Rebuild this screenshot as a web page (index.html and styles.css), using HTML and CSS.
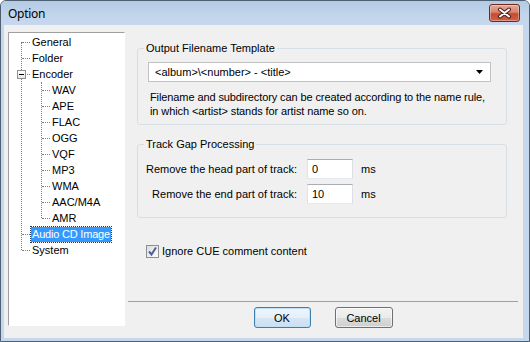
FILE: index.html
```html
<!DOCTYPE html>
<html lang="en">

<head>
    <meta charset="UTF-8">
    <title>Option</title>
    <link rel="stylesheet" href="styles.css">
</head>

<body>
    <div class="window">
        <!-- Title bar -->
        <div class="titlebar">
            <span class="title">Option</span>
            <button class="close-btn">
                <svg width="29" height="16" viewBox="0 0 29 16">
                    <path d="M10 4.5 L19 11.5 M19 4.5 L10 11.5" stroke="#4a1d15" stroke-width="4" stroke-linecap="round" fill="none"/>
                    <path d="M10 4.5 L19 11.5 M19 4.5 L10 11.5" stroke="#fff" stroke-width="2" stroke-linecap="round" fill="none"/>
                </svg>
            </button>
        </div>

        <div class="client">
            <!-- Category tree -->
            <div class="tree">
                <ul class="tree-root">
                    <li><span class="node">General</span></li>
                    <li><span class="node">Folder</span></li>
                    <li>
                        <span class="node"><i class="toggle"></i>Encoder</span>
                        <ul class="tree-sub">
                            <li><span class="node">WAV</span></li>
                            <li><span class="node">APE</span></li>
                            <li><span class="node">FLAC</span></li>
                            <li><span class="node">OGG</span></li>
                            <li><span class="node">VQF</span></li>
                            <li><span class="node">MP3</span></li>
                            <li><span class="node">WMA</span></li>
                            <li><span class="node">AAC/M4A</span></li>
                            <li><span class="node">AMR</span></li>
                        </ul>
                    </li>
                    <li><span class="node"><span class="selected">Audio CD Image</span></span></li>
                    <li><span class="node">System</span></li>
                </ul>
            </div>

            <!-- Settings page -->
            <div class="main">
                <div class="content">
                    <fieldset class="group group-template">
                        <legend>Output Filename Template</legend>
                        <div class="combo">
                            <span>&lt;album&gt;\&lt;number&gt; - &lt;title&gt;</span>
                            <svg width="7" height="4" viewBox="0 0 7 4"><path d="M0 0 H7 L3.5 4 Z" fill="#000"/></svg>
                        </div>
                        <p class="hint">Filename and subdirectory can be created according to the name rule,<br>in which &lt;artist&gt; stands for artist name so on.</p>
                    </fieldset>

                    <fieldset class="group group-gap">
                        <legend>Track Gap Processing</legend>
                        <div class="gap-grid">
                            <label>Remove the head part of track:</label>
                            <input type="text" value="0">
                            <span class="unit">ms</span>
                            <label>Remove the end part of track:</label>
                            <input type="text" value="10">
                            <span class="unit">ms</span>
                        </div>
                    </fieldset>

                    <label class="check-row">
                        <span class="checkbox">
                            <svg width="11" height="11" viewBox="0 0 11 11"><path d="M2 5.5 L4.5 8.5 L9 1.5" stroke="#4a5f9c" stroke-width="2" fill="none"/></svg>
                        </span>
                        Ignore CUE comment content
                    </label>
                </div>

                <div class="footer">
                    <button class="btn btn-default">OK</button>
                    <button class="btn">Cancel</button>
                </div>
            </div>
        </div>
    </div>
</body>

</html>
```

FILE: styles.css
```css
* {
    box-sizing: border-box;
    margin: 0;
    padding: 0;
}

body {
    width: 530px;
    height: 342px;
    overflow: hidden;
    font-family: "Liberation Sans", Arial, sans-serif;
    font-size: 11px;
    color: #000;
    background: #fff;
}

.window {
    width: 530px;
    height: 342px;
    display: flex;
    flex-direction: column;
    border: 1px solid #4e5f73;
    border-radius: 6px 6px 0 0;
    background: #c4d7ec;
    overflow: hidden;
}

.titlebar {
    height: 24px;
    display: flex;
    align-items: center;
    justify-content: space-between;
    padding: 0 9px 0 7px;
    background: linear-gradient(#b4cbe5, #c2d5eb 60%, #c6d8ed);
}

.title {
    font-family: "Noto Sans", sans-serif;
    font-size: 12px;
    letter-spacing: -0.3px;
    color: #000;
}

.close-btn {
    width: 31px;
    height: 18px;
    border: 1px solid #6e2a20;
    border-radius: 3px;
    background: linear-gradient(#e6a897 0%, #d8836e 45%, #c44b30 55%, #cd6247 100%);
    box-shadow: inset 0 0 0 1px rgba(255, 255, 255, 0.35);
    display: flex;
    align-items: center;
    justify-content: center;
}

.client {
    flex: 1;
    display: flex;
    margin: 0 6px 3px 3px;
    background: #f0f0f0;
}

/* Tree */
.tree {
    width: 117px;
    margin: 7px 0 12px 4px;
    padding-top: 1px;
    background: #fff;
    border: 1px solid;
    border-color: #a0a0a0 #fff #fff #a0a0a0;
}

.tree ul {
    list-style: none;
    position: relative;
}

.tree-root::before,
.tree-sub::before {
    content: "";
    position: absolute;
    top: 8px;
    bottom: 8px;
    left: 12px;
    border-left: 1px dotted #808080;
}

.tree-sub {
    padding-left: 20px;
}

.tree-sub::before {
    top: 0;
    left: 32px;
}

.node {
    position: relative;
    height: 16px;
    display: flex;
    align-items: center;
    padding-left: 23px;
    white-space: nowrap;
}

.node::before {
    content: "";
    position: absolute;
    top: 8px;
    left: 13px;
    width: 8px;
    border-top: 1px dotted #808080;
}

.toggle {
    position: absolute;
    top: 4px;
    left: 8px;
    width: 9px;
    height: 9px;
    border: 1px solid #919191;
    background: linear-gradient(#fff, #e6e6e6);
    z-index: 1;
}

.toggle::after {
    content: "";
    position: absolute;
    top: 3px;
    left: 1px;
    width: 5px;
    height: 1px;
    background: #000;
}

.selected {
    margin-left: -1px;
    padding: 1px 1px;
    line-height: 13px;
    letter-spacing: -0.2px;
    background: #3399ff;
    color: #fff;
    outline: 1px dotted #1a3c66;
}

/* Right page */
.main {
    flex: 1;
    display: flex;
    flex-direction: column;
}

.content {
    flex: 1;
    padding: 16px 16px 0 12px;
}

.group {
    border: 1px solid #d5dfe5;
    border-radius: 3px;
    padding: 7px 15px 6px 10px;
    min-width: 0;
}

.group legend {
    padding: 0 2px;
    margin-left: -4px;
    line-height: 14px;
}

.combo {
    height: 20px;
    display: flex;
    align-items: center;
    justify-content: space-between;
    padding: 0 7px 0 6px;
    background: #fff;
    border: 1px solid #c2c2c2;
}

.hint {
    margin: 8px 0 0 2px;
    line-height: 14px;
    white-space: nowrap;
    letter-spacing: -0.1px;
}

.group-gap {
    margin-top: 12px;
    padding: 8px 0 13px 10px;
}

.gap-grid {
    margin-left: -10px;
    display: grid;
    grid-template-columns: 159px 46px auto;
    grid-auto-rows: 20px;
    column-gap: 10px;
    row-gap: 5px;
    align-items: center;
}

.gap-grid label {
    text-align: right;
    white-space: nowrap;
}

.gap-grid input {
    width: 46px;
    height: 20px;
    padding-left: 4px;
    font: inherit;
    border: 1px solid;
    border-color: #abadb3 #dbdfe6 #e3e9ef #e2e3ea;
    outline: none;
}

.unit {
    margin-left: -2px;
}

.check-row {
    display: flex;
    align-items: center;
    gap: 3px;
    height: 16px;
    margin: 25px 0 0 9px;
}

.checkbox {
    width: 13px;
    height: 13px;
    border: 1px solid #8e8f8f;
    background: linear-gradient(135deg, #dcdcdc, #fdfdfd);
    display: flex;
    align-items: center;
    justify-content: center;
}

/* Buttons */
.footer {
    display: flex;
    justify-content: center;
    gap: 24px;
    margin: 0 5px 0 3px;
    padding: 5px 0 10px;
    border-top: 1px solid #a0a0a0;
}

.btn {
    width: 58px;
    height: 21px;
    font: inherit;
    color: #000;
    border: 1px solid #707070;
    border-radius: 3px;
    background: linear-gradient(#f2f2f2 0%, #ebebeb 50%, #dddddd 50%, #cfcfcf 100%);
    box-shadow: inset 0 0 0 1px rgba(255, 255, 255, 0.6);
}

.btn-default {
    width: 57px;
    border-color: #3c7fb1;
    background: linear-gradient(#eef6fc 0%, #e4eff9 50%, #d6e6f4 50%, #cde0f1 100%);
    box-shadow: inset 0 0 0 1px #bfe0f6;
}
```
